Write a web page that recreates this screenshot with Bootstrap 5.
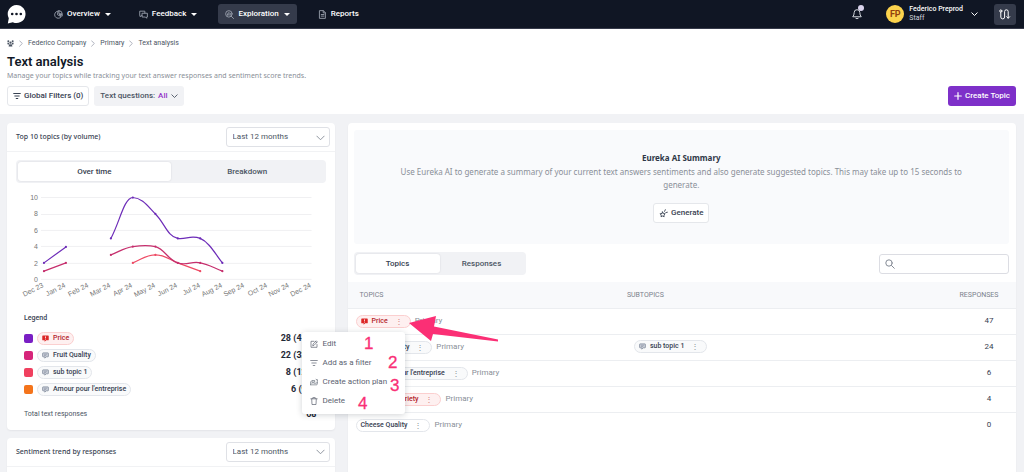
<!DOCTYPE html>
<html lang="en">
<head>
<meta charset="utf-8">
<meta name="viewport" content="width=device-width, initial-scale=1">
<title>Text analysis</title>
<link href="https://cdn.jsdelivr.net/npm/bootstrap@5.3.0/dist/css/bootstrap.min.css" rel="stylesheet">
<style>
  :root { --ink:#1f2937; --text:#4b5563; --muted:#8a8f98; --soft:#f1f2f5; --brand:#7e30c9; }
  body { font-family:Roboto,"Liberation Sans",sans-serif; font-size:8px; line-height:12px; color:var(--text); background:var(--soft); }
  svg { display:block; flex:none; }
  .ico { fill:none; stroke:currentColor; stroke-linecap:round; stroke-linejoin:round; }
  .btn { --bs-btn-font-size:8px; --bs-btn-line-height:12px; --bs-btn-padding-y:3px; --bs-btn-padding-x:5px; --bs-btn-border-radius:3px; font-weight:500; display:inline-flex; align-items:center; gap:3px; }
  .topbar { background:#101624; padding:0 8px 0 7px; height:29px; color:#fff; border-bottom:1px solid #363a4a; }
  .topbar .btn { --bs-btn-padding-x:6px; color:#fff; gap:4px; }
  .topbar .active-item, .topbar .route-btn { background:#353b4b; }
  .menu-row { gap:14px; margin-left:21px; }
  .caret { width:0; height:0; border:3px solid transparent; border-top-color:#fff; border-bottom:0; margin-left:1px; }
  .dim { color:#9aa0ad; }
  .avatar { width:18px; height:18px; background:#fcd34d; color:#92400e; font-weight:700; font-size:9px; }
  .who { font-size:7px; line-height:9px; color:#d1d5db; margin:0 8px 0 5px; }
  .who b { color:#fff; font-weight:500; display:block; }
  .bell { position:relative; margin-right:24px; color:#d1d5db; background:none; border:0; padding:0; }
  .bell i { position:absolute; top:-3px; right:-2px; width:6px; height:6px; border-radius:50%; background:#d9d3ec; }
  .route-btn { margin-left:16px; }
  .page-head { background:#fff; padding:8px 8px 8px 7px; }
  .crumbs { font-size:7px; gap:5px; color:var(--text); }
  .crumbs a { color:inherit; text-decoration:none; }
  h1 { font-size:13px; line-height:16px; font-weight:600; color:#111827; margin:5px 0 1px; }
  .subtitle { font-family:"Noto Sans",sans-serif; font-size:7px; line-height:10px; color:var(--muted); margin:0 0 5px; }
  .btn-plain { background:#fff; border-color:#e5e7eb; color:#374151; }
  .btn-soft { background:var(--soft); color:var(--text); margin-left:5px; }
  .btn-brand, .btn-brand:hover { background:var(--brand); color:#fff; }
  .accent { color:#9333c8; }
  .board { display:grid; grid-template-columns:49fr 100fr; gap:13px; padding:9px 8px 0 7px; }
  .panel { background:#fff; border-radius:4px; box-shadow:0 1px 2px #1118270f; }
  .panel-head { height:29px; padding:0 5px 0 9px; border-bottom:1px solid #f1f2f4; }
  .panel-head h2 { font-family:"Noto Sans",sans-serif; font-size:7px; line-height:12px; font-weight:500; margin:0; color:#374151; }
  .panel-fill { padding:8px 9px 0; }
  .period { width:104px; height:20px; font-size:8px; line-height:12px; padding:3px 16px 3px 6px; border:1px solid #dfe1e6; border-radius:3px; color:var(--text);
    background-size:9px; background-position:right 4px center;
    --bs-form-select-bg-img:url("data:image/svg+xml,%3csvg xmlns='http://www.w3.org/2000/svg' viewBox='0 0 16 16'%3e%3cpath fill='none' stroke='%23858b96' stroke-width='1.6' d='m1 5 7 7 7-7'/%3e%3c/svg%3e"); }
  .switch { background:var(--soft); border-radius:4px; padding:2px; height:23px; }
  .switch button { flex:1; border:0; background:none; border-radius:3px; font-weight:500; color:var(--text); padding:0; }
  .switch .on { background:#fff; box-shadow:0 0 2px #11182722; color:#374151; }
  .chart { margin-top:3px; }
  .chart text { font:7px "Liberation Sans",sans-serif; fill:#777; text-anchor:end; }
  .legend-box { padding:6px 9px 10px 8px; }
  .legend-box h3 { font-size:7px; line-height:12px; font-weight:500; margin:0 0 6px; color:#374151; }
  .legend-line { height:17px; gap:4px; }
  .legend-line b, .total b { color:var(--ink); font-size:9px; font-weight:700; margin-left:auto; }
  .swatch { width:9px; height:9px; border-radius:2px; }
  .total { font-size:7px; margin-top:10px; }
  .chip { display:inline-flex; align-items:center; gap:4px; height:13px; padding:0 4px; border:1px solid #e3e6eb; border-radius:7px; background:#f9fafb; color:#374151; font-size:7px; line-height:11px; font-weight:500; white-space:nowrap; }
  .chip.bad { background:#fef0f0; border-color:#fbcfcf; color:#b4232a; }
  .chip.clear { background:#fff; }
  .chip svg { color:#8a93a3; }
  .chip.bad svg { color:#dc2626; }
  .chip button { border:0; background:none; padding:0; width:14px; color:inherit; font-size:8px; line-height:11px; opacity:.6; }
  .summary { margin:7px 7px 8px 6px; padding:22px 36px 21px; background:#f9fafc; border-radius:3px; text-align:center; color:var(--muted); line-height:13px; }
  .summary h2 { font-family:"Noto Sans",sans-serif; font-size:8px; line-height:12px; font-weight:700; color:#2f3747; margin:0 0 1px; }
  .summary p { font-family:"Noto Sans",sans-serif; margin:0 0 12px; font-size:8px; }
  .tools { padding:0 7px 0 6px; }
  .tools .switch { width:172px; }
  .search { position:relative; width:130px; }
  .search input { height:20px; font-size:8px; line-height:12px; padding:3px 6px 3px 18px; border:1px solid #dcdde3; border-radius:3px; }
  .search svg { position:absolute; left:6px; top:5px; color:#858b96; }
  .topics { margin:7px 0 0; --bs-table-bg:transparent; color:var(--text); }
  .topics th, .topics td { padding:0 8px; height:26px; vertical-align:middle; border-bottom:1px solid #eceef1; }
  .topics th { background:#f8f9fb; font-size:7px; font-weight:400; color:#7b818c; padding:0 12px; }
  .topics tr:last-child td { border-bottom:0; }
  .topics .count { text-align:center; width:90px; padding:0 0 0 36px; color:#374151; }
  .topics th.count { padding:0 0 0 16px; color:#7b818c; }
  .topics .sub { padding-left:19px; }
  .cell { display:flex; align-items:center; gap:4px; color:var(--muted); }
  .anchor-box { position:relative; display:inline-flex; }
  .action-menu { position:absolute; left:-54px; top:17px; width:103px; z-index:5; background:#fff; border-radius:3px; padding:3px 0; box-shadow:0 1px 6px #11182730; }
  .action-menu button { display:flex; align-items:center; gap:5px; border:0; background:none; width:100%; height:19px; padding:0 8px; color:#5b6270; font-size:8px; line-height:12px; white-space:nowrap; }
  .notes { position:absolute; left:-54px; top:0; z-index:6; pointer-events:none; }
  .notes text { font:17px "Liberation Sans",sans-serif; fill:#f92f76; stroke:#f92f76; stroke-width:.3; }
  .open-end { border-bottom-left-radius:0; border-bottom-right-radius:0; }
</style>
<script src="https://cdn.jsdelivr.net/npm/bootstrap@5.3.0/dist/js/bootstrap.bundle.min.js"></script>
</head>
<body>
<svg width="0" height="0" class="position-absolute" aria-hidden="true">
  <symbol id="bubble" viewBox="0 0 8 8"><path fill="currentColor" d="M1 .6h6q.7 0 .7.7v4q0 .7-.7.7H4.800L3 7.700V6H1Q.3 6 .3 5.300v-4Q.3.6 1 .6Z"/><path stroke="#fff" stroke-width=".9" d="M4 1.600V3.800M4 4.400v.8"/></symbol>
  <symbol id="bubble-o" viewBox="0 0 8 8"><path fill="#c9ced8" stroke="currentColor" stroke-width="1" d="M1.200 1h5.600q.5 0 .5.500v3.500q0 .5-.5.500H4.800L3.200 7V5.500h-2Q.7 5.500.7 5V1.500Q.7 1 1.200 1Z"/><path stroke="currentColor" stroke-width=".7" d="M2.300 2.600h3.400M2.300 4h2.400"/></symbol>
</svg>
<div class="min-vh-100 d-flex flex-column">
<nav class="topbar navbar-expand d-flex align-items-center" aria-label="Main">
  <a href="#" aria-label="Home"><svg width="19" height="20" viewBox="0 0 19 20"><path fill="#fff" d="M9.500 1a9 9 0 1 1-3.700 17.200L.8 19.500l1-5.200A9 9 0 0 1 9.500 1Z"/><g fill="#101624"><circle cx="5.200" cy="10" r="1.300"/><circle cx="9.500" cy="10" r="1.300"/><circle cx="13.800" cy="10" r="1.300"/></g></svg></a>
  <div class="menu-row d-flex">
    <button class="btn"><svg class="ico dim" width="9" height="9" viewBox="0 0 10 10"><path d="M4.200 1.200A4 4 0 1 0 8 7.400L4.200 5.400ZM5.500.8v3.400h3.700A3.600 3.600 0 0 0 5.500.8ZM6 5.400l3 1.500.3-1.500Z"/></svg>Overview<span class="caret"></span></button>
    <button class="btn"><svg class="ico dim" width="9" height="9" viewBox="0 0 10 10"><path d="M3.300 6.300H2.500L1.300 7.500V6.200H.8V1.300h5.700v2M3.800 3.600h5.500v4.200h-.8v1.400L7.200 7.800H3.800Z"/></svg>Feedback<span class="caret"></span></button>
    <button class="btn active-item"><svg class="ico dim" width="9" height="9" viewBox="0 0 10 10"><circle cx="4.300" cy="4.300" r="3.600"/><path d="m7 7 2.500 2.500M2.800 5.800V4.300M4.300 5.800V2.500M5.800 5.800V3.700"/></svg>Exploration<span class="caret"></span></button>
    <a href="#" class="btn"><svg class="ico dim" width="9" height="9" viewBox="0 0 10 10"><path d="M2 .7h4l2.200 2.300v6.300H2ZM5.800.8v2.400h2.300M3.600 5h3M3.600 6.800h3"/></svg>Reports</a>
  </div>
  <div class="d-flex align-items-center ms-auto">
    <button class="bell" aria-label="Notifications"><svg class="ico" width="10" height="12" viewBox="0 0 10 12"><path d="M1 8.500Q2.200 7.300 2.200 4.500a2.800 2.800 0 0 1 5.600 0Q7.800 7.300 9 8.500ZM3.800 10.400q1.200.9 2.400 0"/></svg><i></i></button>
    <span class="avatar rounded-circle d-flex align-items-center justify-content-center">FP</span>
    <span class="who"><b>Federico Preprod</b>Staff</span>
    <svg class="ico" width="7" height="5" viewBox="0 0 7 5"><path d="m.8.8 2.700 2.700L6.200.8"/></svg>
    <button class="btn route-btn p-1" aria-label="Journeys"><svg class="ico" width="12" height="11" viewBox="0 0 12 11"><circle cx="1.800" cy="2" r="1.100"/><path d="M1.800 3.100V8a1.900 1.900 0 0 0 3.800 0V2.600a1.800 1.800 0 0 1 3.600 0V9M7.700 7.700 9.200 9.300l1.500-1.600"/></svg></button>
  </div>
</nav>

<header class="page-head">
  <nav class="crumbs d-flex align-items-center" aria-label="Breadcrumb">
    <svg width="7" height="7" viewBox="0 0 8 8" fill="#4b5563"><circle cx="1.500" cy="1.500" r="1.100"/><circle cx="6.500" cy="1.500" r="1.100"/><circle cx="4" cy="3" r="1.300"/><path d="M.3 3h1.700L3 5H.8ZM7.700 3H6L5 5h2.200ZM1.800 7.500q0-2.700 2.200-2.700t2.200 2.700Z"/></svg>
    <svg class="ico dim" width="4" height="7" viewBox="0 0 4 7"><path stroke-width=".8" d="m.6.8 2.700 2.700L.6 6.200"/></svg><a href="#">Federico Company</a>
    <svg class="ico dim" width="4" height="7" viewBox="0 0 4 7"><path stroke-width=".8" d="m.6.8 2.700 2.700L.6 6.200"/></svg><a href="#">Primary</a>
    <svg class="ico dim" width="4" height="7" viewBox="0 0 4 7"><path stroke-width=".8" d="m.6.8 2.700 2.700L.6 6.200"/></svg><a href="#">Text analysis</a>
  </nav>
  <h1>Text analysis</h1>
  <p class="subtitle">Manage your topics while tracking your text answer responses and sentiment score trends.</p>
  <div class="d-flex">
    <button class="btn btn-plain"><svg class="ico" width="8" height="8" viewBox="0 0 8 8"><path d="M.7 1.500h6.600M1.800 4h4.400M3.200 6.500h1.600"/></svg>Global Filters (0)</button>
    <button class="btn btn-soft">Text questions: <span class="accent">All</span><svg class="ico" width="7" height="5" viewBox="0 0 7 5"><path stroke-width=".9" d="m.8.8 2.700 2.700L6.200.8"/></svg></button>
    <button class="btn btn-brand ms-auto"><svg class="ico" width="8" height="8" viewBox="0 0 8 8"><path stroke-width="1.200" d="M4 .7v6.600M.7 4h6.600"/></svg>Create Topic</button>
  </div>
</header>

<main class="board flex-grow-1">
  <div class="d-flex flex-column gap-2">
    <section class="panel">
      <div class="panel-head d-flex align-items-center justify-content-between">
        <h2>Top 10 topics (by volume)</h2>
        <select class="form-select period" aria-label="Topics period"><option>Last 12 months</option></select>
      </div>
      <div class="panel-fill">
        <div class="switch d-flex"><button class="on">Over time</button><button>Breakdown</button></div>
        <svg class="chart w-100" viewBox="0 0 310 120" role="img" aria-label="Topic volume by month">
          <path stroke="#f0f0f2" d="M25 11.500h271M25 28.500h271M25 44.500h271M25 60.500h271M25 77.500h271M25 93.500h271"/>
          <text x="22" y="14">10</text><text x="22" y="30">8</text><text x="22" y="47">6</text><text x="22" y="63">4</text><text x="22" y="80">2</text><text x="22" y="96">0</text>
          <g fill="none" stroke-width="1.200">
            <path stroke="#ee4a64" d="M117 77C126 73.500 130 69 139.600 69S153 73.500 162 77L184.500 85.300"/>
            <path stroke="#c62f6d" d="M28 85.300 50 77M95 69C104 65.500 108 62 117 60.700S132 59 139.600 60.700C149 63 152 74 162 77C171 80 176 75 184.500 77C193 78.500 198 82 206.700 85.300"/>
            <path stroke="#6d2cb8" d="M28 77 50 61M95 52.500C104 36 108 12 117 11.500C126 12 131 19 139.600 28C148.500 36.500 152 51 162 52.500C170 54 175 48.500 184.500 52.500C193 56 199 67 206.700 77"/>
          </g>
          <path stroke="#ee4a64" stroke-width="2.200" stroke-linecap="round" d="M117 77h0M139.600 69h0M184.500 85.300h0"/>
          <path stroke="#c62f6d" stroke-width="2.200" stroke-linecap="round" d="M28 85.300h0M50 77h0M95 69h0M117 60.700h0M139.600 60.700h0M162 77h0M184.500 77h0M206.700 85.300h0"/>
          <path stroke="#6d2cb8" stroke-width="2.200" stroke-linecap="round" d="M28 77h0M50 61h0M95 52.500h0M117 11.500h0M139.600 28h0M162 52.500h0M184.500 52.500h0M206.700 77h0"/>
          <text transform="translate(28 101) rotate(-27)">Dec 23</text><text transform="translate(50 101) rotate(-27)">Jan 24</text><text transform="translate(73 101) rotate(-27)">Feb 24</text><text transform="translate(95 101) rotate(-27)">Mar 24</text><text transform="translate(117 101) rotate(-27)">Apr 24</text><text transform="translate(140 101) rotate(-27)">May 24</text><text transform="translate(162 101) rotate(-27)">Jun 24</text><text transform="translate(185 101) rotate(-27)">Jul 24</text><text transform="translate(207 101) rotate(-27)">Aug 24</text><text transform="translate(229 101) rotate(-27)">Sep 24</text><text transform="translate(252 101) rotate(-27)">Oct 24</text><text transform="translate(274 101) rotate(-27)">Nov 24</text><text transform="translate(296 101) rotate(-27)">Dec 24</text>
        </svg>
        <div class="legend-box">
          <h3>Legend</h3>
          <div class="legend-line d-flex align-items-center"><span class="swatch" style="background:#7a1fc4"></span><span class="chip bad"><svg width="7" height="7"><use href="#bubble"/></svg>Price</span><b>28 (41%)</b></div>
          <div class="legend-line d-flex align-items-center"><span class="swatch" style="background:#d6257a"></span><span class="chip"><svg width="7" height="7"><use href="#bubble-o"/></svg>Fruit Quality</span><b>22 (32%)</b></div>
          <div class="legend-line d-flex align-items-center"><span class="swatch" style="background:#f0405f"></span><span class="chip"><svg width="7" height="7"><use href="#bubble-o"/></svg>sub topic 1</span><b>8 (12%)</b></div>
          <div class="legend-line d-flex align-items-center"><span class="swatch" style="background:#f4741b"></span><span class="chip"><svg width="7" height="7"><use href="#bubble-o"/></svg>Amour pour l'entreprise</span><b>6 (9%)</b></div>
          <div class="total d-flex">Total text responses<b>68</b></div>
        </div>
      </div>
    </section>
    <section class="panel open-end flex-grow-1">
      <div class="panel-head d-flex align-items-center justify-content-between">
        <h2>Sentiment trend by responses</h2>
        <select class="form-select period" aria-label="Sentiment period"><option>Last 12 months</option></select>
      </div>
    </section>
  </div>

  <section class="panel open-end">
    <div class="summary">
      <h2>Eureka AI Summary</h2>
      <p>Use Eureka AI to generate a summary of your current text answers sentiments and also generate suggested topics. This may take up to 15 seconds to generate.</p>
      <button class="btn btn-plain"><svg class="ico" width="9" height="9" viewBox="0 0 10 10"><path d="m4 3.300.9 1.700 1.900.3-1.300 1.400.2 1.900L4 7.800l-1.700.8.2-1.900L1.200 5.300l1.900-.3ZM6.200 2.600 7 .8M7.600 4l1.700-.4"/></svg>Generate</button>
    </div>
    <div class="d-flex align-items-center justify-content-between tools">
      <div class="switch d-flex"><button class="on">Topics</button><button>Responses</button></div>
      <div class="search"><svg class="ico" width="10" height="10" viewBox="0 0 10 10"><circle cx="4" cy="4" r="3.200"/><path d="m6.500 6.500 2.800 2.800"/></svg><input type="search" class="form-control" aria-label="Search topics"></div>
    </div>
    <table class="table topics">
      <thead><tr><th scope="col" style="width:40%">TOPICS</th><th scope="col">SUBTOPICS</th><th scope="col" class="count">RESPONSES</th></tr></thead>
      <tbody>
        <tr><td><div class="cell"><span class="anchor-box"><span class="chip bad"><svg width="7" height="7"><use href="#bubble"/></svg>Price<button aria-label="Price options">⋮</button></span>
          <span class="action-menu">
            <button><svg class="ico" width="8" height="8" viewBox="0 0 8 8"><path stroke-width=".7" d="M4 1.300H1v6h6V4.500M2.800 5.500 3.100 4 6.300.8l1.100 1.100-3.200 3.200ZM5.500 1.600l1 1"/></svg>Edit</button>
            <button><svg class="ico" width="8" height="8" viewBox="0 0 8 8"><path stroke-width=".7" d="M.7 1.500h6.600M1.800 4h4.400M3.200 6.500h1.600"/></svg>Add as a filter</button>
            <button><svg class="ico" width="8" height="8" viewBox="0 0 9 8"><path stroke-width=".7" d="M.6 7.200h6.600q1 0 1-1V1.500M.7 3.800V7M2.500 2.300h2.800v1.800H2.500ZM2 5.300l1.500-.5 2 .8 2.600-.8M6.800 1l1.400.8"/></svg>Create action plan</button>
            <button><svg class="ico" width="8" height="8" viewBox="0 0 8 8"><path stroke-width=".7" d="M.8 1.800h6.400M2.800 1.700V.6h2.400v1.100M1.700 2l.3 5.500h4L6.300 2"/></svg>Delete</button>
          </span>
          <svg class="notes" width="200" height="102" viewBox="0 0 200 102" role="img" aria-label="Steps 1 to 4"><path fill="#fb2f75" d="M107 8 134 1 132 11.500 196 24.500V26.500L131 19 129 26Z"/><text x="62" y="34">1</text><text x="86" y="53">2</text><text x="88" y="76">3</text><text x="56" y="94">4</text></svg>
        </span>Primary</div></td><td></td><td class="count">47</td></tr>
        <tr><td><div class="cell"><span class="chip"><svg width="7" height="7"><use href="#bubble-o"/></svg>Fruit Quality<button aria-label="Fruit Quality options">⋮</button></span>Primary</div></td><td class="sub"><span class="chip"><svg width="7" height="7"><use href="#bubble-o"/></svg>sub topic 1<button aria-label="sub topic 1 options">⋮</button></span></td><td class="count">24</td></tr>
        <tr><td><div class="cell"><span class="chip"><svg width="7" height="7"><use href="#bubble-o"/></svg>Amour pour l'entreprise<button aria-label="Amour pour l'entreprise options">⋮</button></span>Primary</div></td><td></td><td class="count">6</td></tr>
        <tr><td><div class="cell"><span class="chip bad"><svg width="7" height="7"><use href="#bubble"/></svg>Cheese Variety<button aria-label="Cheese Variety options">⋮</button></span>Primary</div></td><td></td><td class="count">4</td></tr>
        <tr><td><div class="cell"><span class="chip clear">Cheese Quality<button aria-label="Cheese Quality options">⋮</button></span>Primary</div></td><td></td><td class="count">0</td></tr>
      </tbody>
    </table>
  </section>
</main>
</div>
</body>
</html>
